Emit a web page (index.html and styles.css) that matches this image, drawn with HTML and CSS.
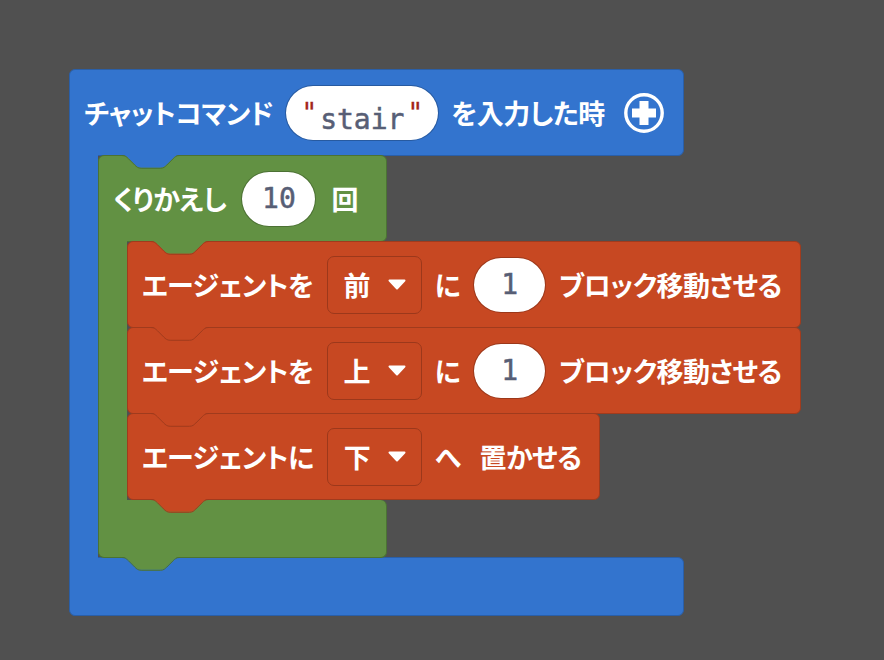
FILE: index.html
```html
<!DOCTYPE html>
<html lang="ja">
<head>
<meta charset="utf-8">
<title>MakeCode blocks</title>
<link rel="stylesheet" href="styles.css">
</head>
<body>
<div class="workspace">
  <div class="block hat">
    <div class="row hat-row">
      <span class="label">チャットコマンド</span>
      <span class="pill pill-str"><span class="q">"</span>stair<span class="q">"</span></span>
      <span class="label">を入力した時</span>
      <svg class="plus" width="40" height="40" viewBox="0 0 40 40"><circle cx="20" cy="20" r="18.2" fill="none" stroke="#fff" stroke-width="3.4"/><path d="M15.5 8 H24.5 V15.5 H32 V24.5 H24.5 V32 H15.5 V24.5 H8 V15.5 H15.5 Z" fill="#fff"/></svg>
    </div>
    <div class="c-body">
      <div class="arm arm-blue"></div>
      <div class="stack">
        <div class="block loop">
          <svg class="conn conn-top-loop on-blue" width="84" height="15" viewBox="0 0 84 15"><path class="cf" d="M24 0 C27.2 0 28.8 1.6 30.4 3.2 L36.8 9.6 C38.4 11.2 40 12.8 43.2 12.8 H62.4 C65.6 12.8 67.2 11.2 68.8 9.6 L75.2 3.2 C76.8 1.6 78.4 0 81.6 0 Z"/><path class="cs" d="M24 0.5 C27.2 0.5 28.8 2.1 30.4 3.7 L36.8 10.1 C38.4 11.7 40 13.3 43.2 13.3 H62.4 C65.6 13.3 67.2 11.7 68.8 10.1 L75.2 3.7 C76.8 2.1 78.4 0.5 81.6 0.5"/></svg>
          <div class="row loop-row">
            <span class="label">くりかえし</span>
            <span class="pill pill-ten">10</span>
            <span class="label">回</span>
          </div>
          <div class="c-body">
            <div class="arm arm-green"></div>
            <div class="stack">
              <div class="block stmt">
                <svg class="conn conn-top on-green" width="84" height="15" viewBox="0 0 84 15"><path class="cf" d="M24 0 C27.2 0 28.8 1.6 30.4 3.2 L36.8 9.6 C38.4 11.2 40 12.8 43.2 12.8 H62.4 C65.6 12.8 67.2 11.2 68.8 9.6 L75.2 3.2 C76.8 1.6 78.4 0 81.6 0 Z"/><path class="cs" d="M24 0.5 C27.2 0.5 28.8 2.1 30.4 3.7 L36.8 10.1 C38.4 11.7 40 13.3 43.2 13.3 H62.4 C65.6 13.3 67.2 11.7 68.8 10.1 L75.2 3.7 C76.8 2.1 78.4 0.5 81.6 0.5"/></svg>
                <span class="label">エージェントを</span>
                <span class="dropdown"><span class="label">前</span><svg class="caret" width="18" height="11" viewBox="0 0 18 11"><path d="M1.5 1.5 H16.5 L9 9.5 Z" fill="#fff" stroke="#fff" stroke-width="2" stroke-linejoin="round"/></svg></span>
                <span class="label">に</span>
                <span class="pill pill-one">1</span>
                <span class="label">ブロック移動させる</span>
              </div>
              <div class="block stmt">
                <svg class="conn conn-top on-orange" width="84" height="15" viewBox="0 0 84 15"><path class="cf" d="M24 0 C27.2 0 28.8 1.6 30.4 3.2 L36.8 9.6 C38.4 11.2 40 12.8 43.2 12.8 H62.4 C65.6 12.8 67.2 11.2 68.8 9.6 L75.2 3.2 C76.8 1.6 78.4 0 81.6 0 Z"/><path class="cs" d="M24 0.5 C27.2 0.5 28.8 2.1 30.4 3.7 L36.8 10.1 C38.4 11.7 40 13.3 43.2 13.3 H62.4 C65.6 13.3 67.2 11.7 68.8 10.1 L75.2 3.7 C76.8 2.1 78.4 0.5 81.6 0.5"/></svg>
                <span class="label">エージェントを</span>
                <span class="dropdown"><span class="label">上</span><svg class="caret" width="18" height="11" viewBox="0 0 18 11"><path d="M1.5 1.5 H16.5 L9 9.5 Z" fill="#fff" stroke="#fff" stroke-width="2" stroke-linejoin="round"/></svg></span>
                <span class="label">に</span>
                <span class="pill pill-one">1</span>
                <span class="label">ブロック移動させる</span>
              </div>
              <div class="block stmt">
                <svg class="conn conn-top on-orange" width="84" height="15" viewBox="0 0 84 15"><path class="cf" d="M24 0 C27.2 0 28.8 1.6 30.4 3.2 L36.8 9.6 C38.4 11.2 40 12.8 43.2 12.8 H62.4 C65.6 12.8 67.2 11.2 68.8 9.6 L75.2 3.2 C76.8 1.6 78.4 0 81.6 0 Z"/><path class="cs" d="M24 0.5 C27.2 0.5 28.8 2.1 30.4 3.7 L36.8 10.1 C38.4 11.7 40 13.3 43.2 13.3 H62.4 C65.6 13.3 67.2 11.7 68.8 10.1 L75.2 3.7 C76.8 2.1 78.4 0.5 81.6 0.5"/></svg>
                <span class="label">エージェントに</span>
                <span class="dropdown"><span class="label">下</span><svg class="caret" width="18" height="11" viewBox="0 0 18 11"><path d="M1.5 1.5 H16.5 L9 9.5 Z" fill="#fff" stroke="#fff" stroke-width="2" stroke-linejoin="round"/></svg></span>
                <span class="label">へ</span>
                <span class="label label-spaced">置かせる</span>
                <svg class="conn conn-bottom tab-orange" width="84" height="15" viewBox="0 0 84 15"><path class="cf" d="M24 0 C27.2 0 28.8 1.6 30.4 3.2 L36.8 9.6 C38.4 11.2 40 12.8 43.2 12.8 H62.4 C65.6 12.8 67.2 11.2 68.8 9.6 L75.2 3.2 C76.8 1.6 78.4 0 81.6 0 Z"/><path class="cs" d="M24 0.5 C27.2 0.5 28.8 2.1 30.4 3.7 L36.8 10.1 C38.4 11.7 40 13.3 43.2 13.3 H62.4 C65.6 13.3 67.2 11.7 68.8 10.1 L75.2 3.7 C76.8 2.1 78.4 0.5 81.6 0.5"/></svg>
              </div>
            </div>
          </div>
          <div class="loop-foot"></div>
          <svg class="conn conn-bottom-loop tab-green" width="84" height="15" viewBox="0 0 84 15"><path class="cf" d="M24 0 C27.2 0 28.8 1.6 30.4 3.2 L36.8 9.6 C38.4 11.2 40 12.8 43.2 12.8 H62.4 C65.6 12.8 67.2 11.2 68.8 9.6 L75.2 3.2 C76.8 1.6 78.4 0 81.6 0 Z"/><path class="cs" d="M24 0.5 C27.2 0.5 28.8 2.1 30.4 3.7 L36.8 10.1 C38.4 11.7 40 13.3 43.2 13.3 H62.4 C65.6 13.3 67.2 11.7 68.8 10.1 L75.2 3.7 C76.8 2.1 78.4 0.5 81.6 0.5"/></svg>
        </div>
      </div>
    </div>
    <div class="hat-foot"></div>
  </div>
</div>
</body>
</html>
```
FILE: styles.css
```css
* { box-sizing: border-box; }
html, body { margin: 0; }
body {
  background: #505050;
  width: 884px;
  height: 660px;
  overflow: hidden;
  font-family: "Noto Sans CJK JP", "Noto Sans", sans-serif;
}
.workspace { padding: 69px 0 0 69px; }

.block { position: relative; }

.hat {
  display: flex;
  flex-direction: column;
  align-items: flex-start;
  width: max-content;
}

.row {
  display: flex;
  align-items: center;
  height: 87px;
}

.label {
  color: #fff;
  font-weight: 700;
  font-size: 27px;
  line-height: 1;
  letter-spacing: -0.5px;
  font-feature-settings: "palt";
  white-space: nowrap;
}
.label-spaced { margin-left: 6px; }

/* blue hat block */
.hat-row {
  width: 615px;
  gap: 12px;
  padding: 0 15px 0 14px;
  background: #3374ce;
  border: 1px solid #2a5fa8;
  border-radius: 6px 6px 6px 0;
}
.hat-foot {
  width: 615px;
  height: 59px;
  margin-top: -1px;
  background: #3374ce;
  border: 1px solid #2a5fa8;
  border-radius: 0 6px 6px 6px;
}

.c-body { display: flex; }
.stack {
  display: flex;
  flex-direction: column;
  align-items: flex-start;
}
.arm {
  position: relative;
  width: 29px;
  margin: -1px 0;
  flex: none;
}
.arm-blue { background: #3374ce; border-left: 1px solid #2a5fa8; }
.arm-green { background: #629143; border-left: 1px solid #4b7234; }

/* green loop block */
.loop { margin-top: -1px; }
.loop-row {
  width: 289px;
  gap: 15px;
  padding: 0 14px;
  background: #629143;
  border: 1px solid #4b7234;
  border-radius: 6px 6px 6px 0;
}
.loop-foot {
  width: 289px;
  height: 58px;
  background: #629143;
  border: 1px solid #4b7234;
  border-top: none;
  border-radius: 0 6px 6px 6px;
}

/* orange statement blocks */
.stmt {
  display: flex;
  align-items: center;
  gap: 13px;
  height: 87px;
  margin-top: -1px;
  padding: 0 18px 0 14px;
  background: #c74822;
  border: 1px solid #a03b1d;
  border-radius: 6px;
}

.dropdown {
  display: flex;
  align-items: center;
  justify-content: space-between;
  width: 95px;
  height: 58px;
  padding: 0 15px 0 16px;
  border: 1px solid #9c381b;
  border-radius: 7px;
}

.pill {
  display: block;
  height: 56px;
  background: #fff;
  background-clip: padding-box;
  border: 1px solid rgba(0, 0, 0, 0.22);
  border-radius: 28px;
  font-family: "DejaVu Sans Mono", "Liberation Mono", monospace;
  font-size: 28px;
  line-height: 54px;
  text-align: center;
  color: #575e75;
  -webkit-text-stroke: 0.5px #575e75;
}
.pill-str { width: 154px; }
.pill-ten { width: 75px; }
.pill-one { width: 73px; }
.q {
  color: #a3261a;
  -webkit-text-stroke: 0.3px #a3261a;
  font-size: 26px;
  vertical-align: 7px;
  margin: 0 3px;
}

.plus { display: block; flex: none; margin-left: 7px; }
.caret { display: block; }

/* connection notches and tabs */
.conn { position: absolute; display: block; z-index: 2; }
.conn .cs { fill: none; stroke-width: 1; }
.conn-top { top: -1px; left: -1px; }
.conn-top-loop { top: 0; left: 0; }
.conn-bottom { top: 100%; left: -1px; }
.conn-bottom-loop { top: calc(100% - 1px); left: 0; }

.on-blue .cf { fill: #3374ce; }
.on-blue .cs { stroke: #4b7234; }
.on-green .cf { fill: #629143; }
.on-green .cs { stroke: #a03b1d; }
.on-orange .cf { fill: #c74822; }
.on-orange .cs { stroke: #a03b1d; }
.tab-orange .cf { fill: #c74822; }
.tab-orange .cs { stroke: #a03b1d; }
.tab-green .cf { fill: #629143; }
.tab-green .cs { stroke: #4b7234; }
```
